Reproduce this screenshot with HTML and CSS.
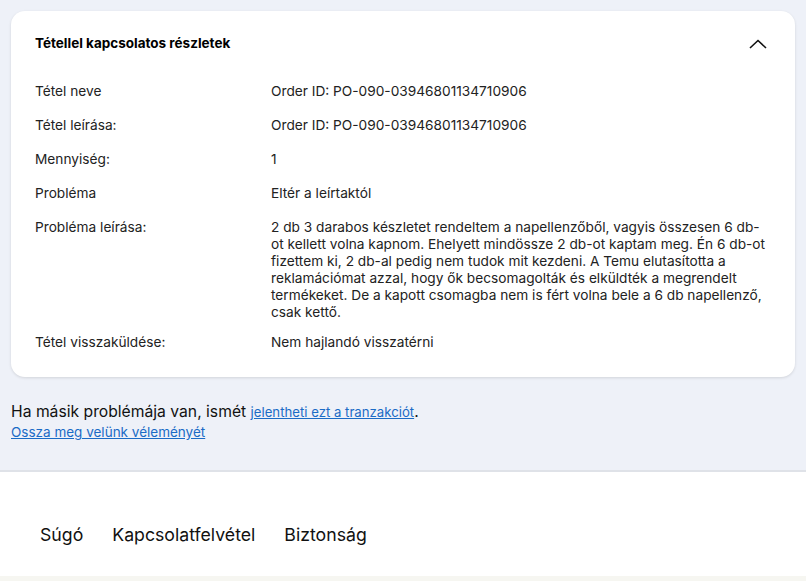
FILE: index.html
```html
<!DOCTYPE html>
<html lang="hu">
<head>
    <meta charset="UTF-8">
    <meta name="viewport" content="width=device-width, initial-scale=1.0">
    <title>Tétellel kapcsolatos részletek</title>
    <link rel="stylesheet" href="styles.css">
</head>
<body>
    <div class="page">
        <div class="card">
            <div class="card-head">
                <h2>Tétellel kapcsolatos részletek</h2>
                <svg class="chevron" width="18" height="10" viewBox="0 0 18 10">
                    <path d="M1 9 L9 1.5 L17 9" fill="none" stroke="#111" stroke-width="1.6"/>
                </svg>
            </div>
            <div class="row">
                <div class="label">Tétel neve</div>
                <div class="value">Order ID: PO-090-03946801134710906</div>
            </div>
            <div class="row">
                <div class="label">Tétel leírása:</div>
                <div class="value">Order ID: PO-090-03946801134710906</div>
            </div>
            <div class="row">
                <div class="label">Mennyiség:</div>
                <div class="value">1</div>
            </div>
            <div class="row">
                <div class="label">Probléma</div>
                <div class="value">Eltér a leírtaktól</div>
            </div>
            <div class="row row-long">
                <div class="label">Probléma leírása:</div>
                <div class="value">2 db 3 darabos készletet rendeltem a napellenzőből, vagyis összesen 6 db-ot kellett volna kapnom. Ehelyett mindössze 2 db-ot kaptam meg. Én 6 db-ot fizettem ki, 2 db-al pedig nem tudok mit kezdeni. A Temu elutasította a reklamációmat azzal, hogy ők becsomagolták és elküldték a megrendelt termékeket. De a kapott csomagba nem is fért volna bele a 6 db napellenző, csak kettő.</div>
            </div>
            <div class="row">
                <div class="label">Tétel visszaküldése:</div>
                <div class="value">Nem hajlandó visszatérni</div>
            </div>
        </div>

        <p class="note">Ha másik problémája van, ismét <a href="#">jelentheti ezt a tranzakciót</a>.</p>
        <a class="feedback" href="#">Ossza meg velünk véleményét</a>
    </div>

    <footer class="footer">
        <a href="#">Súgó</a>
        <a href="#">Kapcsolatfelvétel</a>
        <a href="#">Biztonság</a>
    </footer>
    <div class="bottom-strip"></div>
</body>
</html>
```

FILE: styles.css
```css
body {
    margin: 0;
    font-family: Inter, "Noto Sans", Arial, sans-serif;
    background-color: #eef1f8;
    color: #222;
}
.page {
    padding: 11px 11px 0 11px;
    height: 470px;
    box-sizing: border-box;
}
.card {
    background: #fff;
    border-radius: 14px;
    box-shadow: 0 1px 3px rgba(0, 0, 0, 0.12);
    padding: 24px 24px 26px 24px;
}
.card-head {
    display: flex;
    justify-content: space-between;
    align-items: center;
    margin-bottom: 31px;
}
.card-head h2 {
    margin: 0;
    font-size: 13.5px;
    line-height: 17px;
    font-weight: 700;
    color: #000;
}
.chevron {
    margin-right: 4px;
}
.row {
    display: flex;
    font-size: 13.7px;
    line-height: 17px;
    margin-bottom: 17px;
}
.row-long {
    margin-bottom: 13px;
}
.row:last-child {
    margin-bottom: 0;
}
.label {
    width: 236px;
    flex-shrink: 0;
}
.value {
    flex: 1;
}
.note {
    margin: 25px 0 0 0;
    font-size: 15.7px;
    line-height: 20px;
    color: #111;
}
a {
    color: #1a6bc6;
}
.note a {
    font-size: 13.2px;
}
.feedback {
    display: block;
    font-size: 13.5px;
    line-height: 20px;
}
.footer {
    background: #fff;
    border-top: 2px solid #dfe2e8;
    height: 106px;
    display: flex;
    align-items: flex-start;
    gap: 29px;
    padding: 52px 0 0 40px;
    box-sizing: border-box;
}
.footer a {
    color: #111;
    text-decoration: none;
    font-size: 17.7px;
    line-height: 22px;
}
.bottom-strip {
    background: #f6f6f1;
    height: 10px;
}
```
